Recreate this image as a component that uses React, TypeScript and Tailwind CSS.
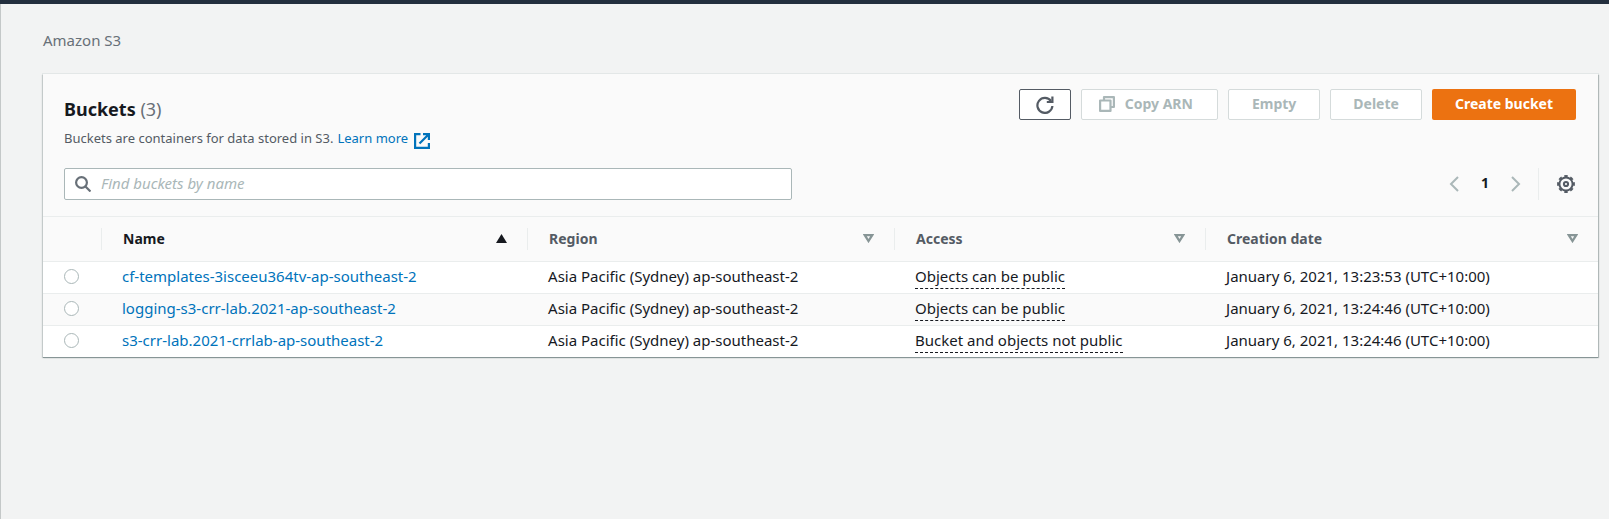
import React from "react";

type Bucket = { name: string; region: string; access: string; created: string };

const buckets: Bucket[] = [
  {
    name: "cf-templates-3isceeu364tv-ap-southeast-2",
    region: "Asia Pacific (Sydney) ap-southeast-2",
    access: "Objects can be public",
    created: "January 6, 2021, 13:23:53 (UTC+10:00)",
  },
  {
    name: "logging-s3-crr-lab.2021-ap-southeast-2",
    region: "Asia Pacific (Sydney) ap-southeast-2",
    access: "Objects can be public",
    created: "January 6, 2021, 13:24:46 (UTC+10:00)",
  },
  {
    name: "s3-crr-lab.2021-crrlab-ap-southeast-2",
    region: "Asia Pacific (Sydney) ap-southeast-2",
    access: "Bucket and objects not public",
    created: "January 6, 2021, 13:24:46 (UTC+10:00)",
  },
];

const columns = ["Name", "Region", "Access", "Creation date"];

function ExternalIcon() {
  return (
    <svg viewBox="0 0 16 16" className="size-4" fill="none" stroke="currentColor" strokeWidth="2.2" aria-hidden="true">
      <path d="M6.500 1.100H1.100v13.800h13.800V10" />
      <path d="M9 1.100h5.900V7M14.500 1.500 5.500 10.500" />
    </svg>
  );
}

function SearchIcon() {
  return (
    <svg viewBox="0 0 16 16" className="size-4" fill="none" stroke="currentColor" strokeWidth="2.2" aria-hidden="true">
      <circle cx="6.500" cy="6.500" r="5.400" />
      <path d="m10.500 10.500 5 5" />
    </svg>
  );
}

function RefreshIcon() {
  return (
    <svg viewBox="0 0 18 18" className="size-[18px]" fill="none" stroke="currentColor" strokeWidth="2.2" aria-hidden="true">
      <path d="M16.400 10A7.500 7.500 0 1 1 15 5" />
      <path d="M16.400 0.500v5.500h-5.600" />
    </svg>
  );
}

function CopyIcon() {
  return (
    <svg viewBox="0 0 16 16" className="size-4" fill="none" stroke="currentColor" strokeWidth="2.2" strokeLinejoin="round" aria-hidden="true">
      <path d="M1.100 4.500h10.400v10.400H1.100z" />
      <path d="M5 4V1.100h9.900V11h-3" />
    </svg>
  );
}

function GearIcon() {
  return (
    <svg viewBox="0 0 18 18" className="size-[18px]" fill="none" stroke="currentColor" strokeWidth="2" aria-hidden="true">
      <circle cx="9" cy="9" r="6.600" />
      <circle cx="9" cy="9" r="7.900" pathLength="80" strokeDasharray="5.600 4.400" strokeDashoffset="2.800" />
      <circle cx="9" cy="9" r="2.100" />
    </svg>
  );
}

function Chevron({ d }: { d: string }) {
  return (
    <svg viewBox="0 0 10 16" className="h-4 w-[10px]" fill="none" stroke="currentColor" strokeWidth="2" aria-hidden="true">
      <path d={d} />
    </svg>
  );
}

function SortIcon({ active }: { active: boolean }) {
  return active ? (
    <svg viewBox="0 0 11 9" className="h-[9px] w-[11px] text-[#16191f]" fill="currentColor" aria-hidden="true">
      <path d="M5.500 0 11 9H0z" />
    </svg>
  ) : (
    <svg viewBox="0 0 11 9" className="h-[9px] w-[11px] text-[#879596]" fill="none" stroke="currentColor" strokeWidth="2.300" aria-hidden="true">
      <path d="M1.800 1.200h7.400L5.500 7z" />
    </svg>
  );
}

const disabledButton =
  "flex h-[31px] items-center rounded-[2px] border border-[#d5dbdb] bg-white pb-[2px] text-[#aab7b8]";

export default function App() {
  return (
    <div className="min-h-screen border-t-4 border-[#232f3e] bg-[#f2f3f3] font-['Noto_Sans','Open_Sans',sans-serif] text-sm text-[#16191f]">
      <div className="min-h-[calc(100vh-4px)] border-l border-[#c4c8c8] pr-[11px] pl-[42px]">
        <nav aria-label="Breadcrumb" className="pt-[26px] pb-6 text-[15px] leading-5">
          <a href="#s3" className="text-[#687078]">Amazon S3</a>
        </nav>

        <main className="bg-white shadow-[0_1px_0_0_#879596,1px_1px_1px_0_#b0b8b8,-1px_1px_1px_0_#c4caca,0_0_0_1px_#e3e7e7]">
          <header className="border-b border-[#eaeded] bg-[#fafafa] pt-[15px] pr-[22px] pb-4 pl-[21px]">
            <div className="flex items-start justify-between">
              <div className="pt-2">
                <h1 className="text-lg leading-6 font-bold">
                  Buckets <span className="font-normal text-[#687078]">(3)</span>
                </h1>
                <p className="mt-[5px] flex items-center text-[13px] leading-6 text-[#545b64]">
                  Buckets are containers for data stored in S3.
                  <a href="#learn" className="ml-1 flex items-center gap-[6px] text-[#0073bb]">
                    Learn more
                    <span className="pt-[5px]"><ExternalIcon /></span>
                  </a>
                </p>
              </div>
              <div className="flex gap-[10px] font-bold">
                <button aria-label="Refresh" className="flex h-[31px] w-[52px] items-center justify-center rounded-[2px] border border-[#545b64] bg-white text-[#545b64]">
                  <RefreshIcon />
                </button>
                <button disabled className={`${disabledButton} gap-[10px] pr-6 pl-[17px]`}>
                  <CopyIcon />
                  Copy ARN
                </button>
                <button disabled className={`${disabledButton} px-[23px]`}>Empty</button>
                <button disabled className={`${disabledButton} px-[22px]`}>Delete</button>
                <button className="flex h-[31px] items-center rounded-[2px] bg-[#ec7211] px-[23px] pb-[2px] text-white">Create bucket</button>
              </div>
            </div>

            <div className="mt-[18px] flex items-center justify-between">
              <label className="flex h-8 max-w-[728px] flex-1 items-center gap-[10px] rounded-[2px] border border-[#aab7b8] bg-white px-[10px] text-[#687078]">
                <SearchIcon />
                <input
                  type="search"
                  aria-label="Find buckets by name"
                  placeholder="Find buckets by name"
                  className="min-w-0 flex-1 bg-transparent text-[15px] text-[#16191f] outline-none placeholder:text-[#aab7b8] placeholder:italic"
                />
              </label>
              <div className="flex items-center">
                <button aria-label="Previous page" className="text-[#aab7b8]"><Chevron d="M9 1 2 8l7 7" /></button>
                <button aria-current="page" className="px-[22px] pb-[2px] font-bold">1</button>
                <button aria-label="Next page" className="text-[#aab7b8]"><Chevron d="m1 1 7 7-7 7" /></button>
                <span className="ml-[17px] h-8 border-l border-[#eaeded]" />
                <button aria-label="Preferences" className="pr-px pl-[18px] text-[#545b64]"><GearIcon /></button>
              </div>
            </div>
          </header>

          <table className="w-full table-fixed text-left">
            <colgroup>
              <col className="w-[58px]" />
              <col className="w-[27.4%]" />
              <col className="w-[23.6%]" />
              <col className="w-[20%]" />
              <col />
            </colgroup>
            <thead>
              <tr className="h-11 border-b border-[#eaeded] bg-[#fafafa]">
                <td />
                {columns.map((column, i) => (
                  <th key={column} scope="col" className="p-0" aria-sort={i === 0 ? "ascending" : "none"}>
                    <button className="flex h-[22px] w-full items-center justify-between border-l border-[#eaeded] pr-5 pl-[21px] font-bold">
                      <span className={i === 0 ? "text-[#16191f]" : "text-[#545b64]"}>{column}</span>
                      <SortIcon active={i === 0} />
                    </button>
                  </th>
                ))}
              </tr>
            </thead>
            <tbody className="text-[15px]">
              {buckets.map((bucket) => (
                <tr key={bucket.name} className="h-8 border-b border-[#eaeded] last:border-b-0 even:bg-[#fafafa]">
                  <td className="pb-px pl-[21px]">
                    <input
                      type="radio"
                      name="bucket"
                      aria-label={bucket.name}
                      className="block size-[15px] appearance-none rounded-full border border-[#aab7b8] bg-white checked:border-4 checked:border-[#0073bb]"
                    />
                  </td>
                  <td className="pb-px pl-[21px]"><a href="#bucket" className="text-[#0073bb]">{bucket.name}</a></td>
                  <td className="pb-px pl-[21px]">{bucket.region}</td>
                  <td className="py-0 pl-[21px]">
                    <span className="inline-block border-b border-dashed border-[#16191f] pb-[2px] leading-5">{bucket.access}</span>
                  </td>
                  <td className="pb-px pl-[21px]">{bucket.created}</td>
                </tr>
              ))}
            </tbody>
          </table>
        </main>
      </div>
    </div>
  );
}
